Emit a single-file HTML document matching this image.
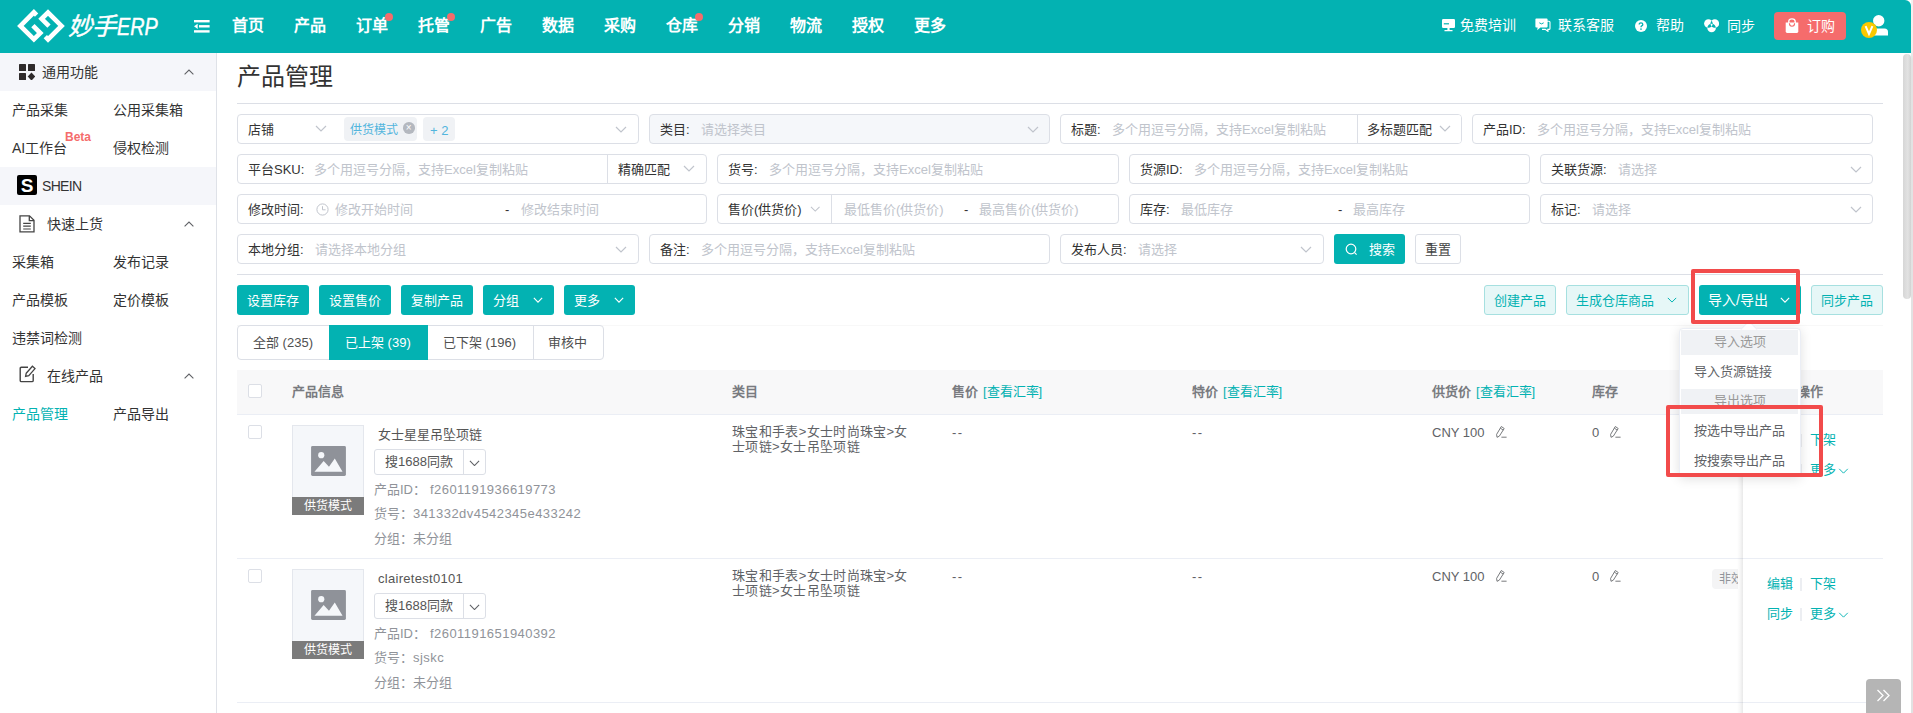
<!DOCTYPE html>
<html lang="zh-CN">
<head>
<meta charset="utf-8">
<title>产品管理</title>
<style>
*{box-sizing:border-box;margin:0;padding:0}
html,body{width:1913px;height:713px;overflow:hidden;background:#fff}
body{position:relative;font-family:"Liberation Sans",sans-serif;font-size:13px;color:#333;line-height:1}
.abs{position:absolute}
/* header */
#hdr{position:absolute;left:0;top:0;width:1911px;height:53px;background:#03b2b2;border-top-right-radius:6px}
.nav{position:absolute;top:16px;font-size:16px;font-weight:bold;color:#fff;line-height:20px;white-space:nowrap}
.dot{position:absolute;width:8px;height:8px;border-radius:50%;background:#f56c6c}
.rnav{position:absolute;top:17px;font-size:14px;color:#fff;line-height:16px;white-space:nowrap}
/* sidebar */
#side{position:absolute;left:0;top:53px;width:217px;height:660px;background:#fff;border-right:1px solid #dfe2e8}
.sh{position:absolute;left:0;width:216px;height:38px;font-size:14px;color:#333;line-height:38px}
.sh.g{background:#f5f6fa}
.sh span{position:absolute;white-space:nowrap}
.si{position:absolute;font-size:14px;color:#333;line-height:18px;white-space:nowrap}
.car{position:absolute;left:184px;width:10px;height:6px}
/* filters */
.hr{position:absolute;left:237px;width:1646px;height:1px;background:#dcdfe6}
.fb{position:absolute;height:30px;border:1px solid #dcdfe6;border-radius:4px;background:#fff;font-size:13px;line-height:29px;white-space:nowrap;overflow:hidden}
.fb .l{position:absolute;left:10px;top:0;color:#333}
.fb .p{position:absolute;top:0;color:#c0c4cc}
.fb .dv{position:absolute;top:0;width:1px;height:28px;background:#dcdfe6}
.chev{position:absolute;width:12px;height:7px}
.btn{position:absolute;height:30px;border-radius:3px;font-size:13px;line-height:31px;white-space:nowrap;text-align:center}
.bt{background:#03b2b2;color:#fff}
.bl{background:#e6f7f7;color:#03b2b2;border:1px solid #a6e0e0;line-height:29px}
.tab{font-size:13px;line-height:35px;color:#505050;white-space:nowrap}

.th{position:absolute;top:370px;height:44px;line-height:44px;font-size:13px;font-weight:bold;color:#797b80;white-space:nowrap}
.th a{font-weight:normal;color:#03b2b2;margin-left:5px}
.cb{position:absolute;left:248px;width:14px;height:14px;border:1px solid #dcdfe6;border-radius:2px;background:#fff}
.td{position:absolute;font-size:13px;line-height:15px;color:#606266;white-space:nowrap}
.tg{position:absolute;font-size:13px;line-height:16px;color:#909399;white-space:nowrap}
.ls{letter-spacing:.45px}
.lk{position:absolute;font-size:13px;line-height:16px;color:#03b2b2;white-space:nowrap}
.rb{position:absolute;left:237px;width:1646px;height:1px;background:#ebeef5}
.vd{position:absolute;width:2px;height:13px;background:#eceef2;margin-left:-1px}
.red{position:absolute;border:4px solid #f24b4b;border-radius:2px}
.mi{position:absolute;left:1694px;font-size:13px;line-height:16px;color:#606266;white-space:nowrap}
.mg{position:absolute;left:1681px;width:117px;background:#f0f2f5;font-size:13px;color:#999;text-align:center;white-space:nowrap}
</style>
</head>
<body>
<!-- HEADER -->
<div id="hdr">
  <svg class="abs" style="left:16px;top:8px" width="50" height="36" viewBox="0 0 50 36">
    <g fill="none" stroke="#fff" stroke-width="4.7" stroke-linejoin="miter" stroke-linecap="butt">
      <path d="M20.6 7.1 L17.9 4.4 L4.4 17.9 L17.9 31.3 L24.3 25 L16.9 17.6"/>
      <path d="M29.3 28.7 L32 31.4 L45.5 17.9 L32 4.5 L25.6 10.8 L33 18.2"/>
    </g>
  </svg>
  <div class="abs" style="left:68px;top:12px;font-size:24.5px;line-height:30px;color:#fff;font-style:italic;white-space:nowrap;-webkit-text-stroke:.45px #fff">妙手<span style="display:inline-block;font-size:23px;transform:scaleX(.86);transform-origin:left center;margin-left:1px">ERP</span></div>
  <svg class="abs" style="left:194px;top:19.7px" width="16" height="13" viewBox="0 0 16 13"><g fill="#fff"><rect x="0" y="0" width="15.6" height="2.4"/><rect x="5" y="5.1" width="10.6" height="2.4"/><rect x="0" y="10.2" width="15.6" height="2.4"/><path d="M0 6.3 L3.7 3.7 L3.7 8.9 Z"/></g></svg>
  <div class="nav" style="left:232px">首页</div>
  <div class="nav" style="left:294px">产品</div>
  <div class="nav" style="left:356px">订单</div><div class="dot" style="left:385px;top:13px"></div>
  <div class="nav" style="left:418px">托管</div><div class="dot" style="left:447px;top:13px"></div>
  <div class="nav" style="left:480px">广告</div>
  <div class="nav" style="left:542px">数据</div>
  <div class="nav" style="left:604px">采购</div>
  <div class="nav" style="left:666px">仓库</div><div class="dot" style="left:695px;top:13px"></div>
  <div class="nav" style="left:728px">分销</div>
  <div class="nav" style="left:790px">物流</div>
  <div class="nav" style="left:852px">授权</div>
  <div class="nav" style="left:914px">更多</div>
  <div class="rnav" style="left:1460px">免费培训</div>
  <div class="rnav" style="left:1558px">联系客服</div>
  <div class="rnav" style="left:1656px">帮助</div>
  <div class="rnav" style="left:1727px;top:18px">同步</div>
  <div class="abs" style="left:1774px;top:12px;width:72px;height:28px;border-radius:4px;background:#f56c6c"></div>
  <div class="rnav" style="left:1807px;top:18px">订购</div>

  <svg class="abs" style="left:1442px;top:19px" width="13" height="13" viewBox="0 0 13 13"><rect x="0" y="0" width="13" height="9" rx="1.2" fill="#fff"/><rect x="1.8" y="4.2" width="5.2" height="1.2" fill="#03b2b2"/><rect x="5.4" y="9" width="2.2" height="2" fill="#fff"/><rect x="2.4" y="10.9" width="8.2" height="1.4" rx=".5" fill="#fff"/></svg>
  <svg class="abs" style="left:1535px;top:18px" width="16" height="14" viewBox="0 0 16 14"><path d="M4.2 3.2 H14 Q15 3.2 15 4.2 V10.4 Q15 11.4 14 11.4 H12.8 L13 13.4 L10.2 11.4 H7" fill="none" stroke="#fff" stroke-width="1.1"/><path d="M1.2 .6 H11.6 Q12.6 .6 12.6 1.6 V8.6 Q12.6 9.6 11.6 9.6 H5.4 L2.2 12.2 L2.6 9.6 H1.2 Q.4 9.6 .4 8.6 V1.6 Q.4 .6 1.2 .6 Z" fill="#fff"/><path d="M4.3 4.8 Q6.5 7 8.7 4.8" fill="none" stroke="#03b2b2" stroke-width="1"/></svg>
  <svg class="abs" style="left:1635px;top:20px" width="12" height="12" viewBox="0 0 12 12"><circle cx="6" cy="6" r="6" fill="#fff"/><path d="M4.2 4.6 Q4.2 2.9 6 2.9 Q7.8 2.9 7.8 4.4 Q7.8 5.4 6.7 5.9 Q6 6.3 6 7.2" fill="none" stroke="#03b2b2" stroke-width="1.3"/><circle cx="6" cy="9.1" r=".85" fill="#03b2b2"/></svg>
  <svg class="abs" style="left:1703.5px;top:19.3px" width="15.2" height="13.4" viewBox="0 0 15.2 13.4"><defs><clipPath id="k1"><circle cx="4.4" cy="4.5" r="4.3"/></clipPath><clipPath id="k2"><circle cx="10.8" cy="4.5" r="4.3"/></clipPath><clipPath id="k3"><circle cx="7.6" cy="9" r="4.3"/></clipPath></defs><circle cx="4.4" cy="4.5" r="4.3" fill="#fff"/><circle cx="10.8" cy="4.5" r="4.3" fill="#fff"/><circle cx="7.6" cy="9" r="4.3" fill="#fff"/><circle cx="10.8" cy="4.5" r="4.3" fill="#03b2b2" clip-path="url(#k1)"/><circle cx="7.6" cy="9" r="4.3" fill="#03b2b2" clip-path="url(#k1)"/><circle cx="7.6" cy="9" r="4.3" fill="#03b2b2" clip-path="url(#k2)"/><g clip-path="url(#k1)"><g clip-path="url(#k2)"><circle cx="7.6" cy="9" r="4.3" fill="#fff"/></g></g></svg>
  <svg class="abs" style="left:1785px;top:18px" width="14" height="16" viewBox="0 0 14 16"><path d="M3.8 5 V3.6 Q3.8 .9 7 .9 Q10.2 .9 10.2 3.6 V5" fill="none" stroke="#fff" stroke-width="1.4"/><path d="M.7 4.4 H13.3 V13.6 Q13.3 15 11.9 15 H2.1 Q.7 15 .7 13.6 Z" fill="#fff"/><path d="M4.4 5.2 Q4.4 8.2 7 8.2 Q9.6 8.2 9.6 5.2" fill="none" stroke="#f56c6c" stroke-width="1.1"/></svg>
  <svg class="abs" style="left:1860px;top:14px" width="30" height="25" viewBox="0 0 30 25"><circle cx="18.7" cy="6.7" r="5.7" fill="#fff"/><path d="M12.5 21.5 V18 Q12.5 14.5 16 14.5 H24.5 Q28 14.5 28 18 V21.5 Z" fill="#fff"/><circle cx="9" cy="16" r="8" fill="#fcc800"/><path d="M5.6 12.2 L9 20 L12.4 12.2" fill="none" stroke="#fff" stroke-width="2"/></svg>
</div>
<!-- SIDEBAR -->
<div id="side">
  <div class="sh g" style="top:0"><span style="left:42px">通用功能</span></div>
  <svg class="abs" style="left:19px;top:11px" width="16" height="16" viewBox="0 0 16 16"><g fill="#2f2b2b"><rect x="0" y="0" width="7" height="7" rx=".6"/><rect x="9" y="0" width="7" height="7" rx=".6"/><rect x="0" y="9" width="7" height="7" rx=".6"/><path d="M12.5 8.4 L16.3 12.5 L12.5 16.6 L8.7 12.5 Z"/></g></svg>
  <svg class="car" style="top:16px" viewBox="0 0 10 6"><path d="M.6 5.4 L5 1 L9.4 5.4" fill="none" stroke="#606266" stroke-width="1.1"/></svg>
  <div class="abs" style="left:17px;top:122px;width:20px;height:20px;border-radius:2px;background:#000;z-index:2"></div>
  <div class="abs" style="left:17px;top:122px;width:20px;height:20px;color:#fff;font-weight:bold;font-size:19px;line-height:21px;text-align:center;z-index:3">S</div>
  <svg class="abs" style="left:19px;top:162px" width="16" height="18" viewBox="0 0 16 18"><path d="M1 .8 H10.5 L15 5.3 V16.8 H1 Z M10.3 1 V5.6 H14.8" fill="none" stroke="#444" stroke-width="1.3"/><path d="M4.2 8.4 H11.8 M4.2 11.2 H11.8 M4.2 14 H11.8" stroke="#444" stroke-width="1.2"/></svg>
  <svg class="car" style="top:168px" viewBox="0 0 10 6"><path d="M.6 5.4 L5 1 L9.4 5.4" fill="none" stroke="#606266" stroke-width="1.1"/></svg>
  <svg class="abs" style="left:19px;top:312px" width="18" height="18" viewBox="0 0 18 18"><path d="M9 2.2 H2.4 Q1.2 2.2 1.2 3.4 V15.4 Q1.2 16.6 2.4 16.6 H13 Q14.2 16.6 14.2 15.4 V9" fill="none" stroke="#444" stroke-width="1.4"/><path d="M7.2 8.2 L13.4 1.2 L16 3.6 L9.8 10.6 L6.6 11.4 Z" fill="none" stroke="#444" stroke-width="1.3"/></svg>
  <svg class="car" style="top:320px" viewBox="0 0 10 6"><path d="M.6 5.4 L5 1 L9.4 5.4" fill="none" stroke="#606266" stroke-width="1.1"/></svg>

  <div class="si" style="left:12px;top:48px">产品采集</div>
  <div class="si" style="left:113px;top:48px">公用采集箱</div>
  <div class="si" style="left:12px;top:86px">AI工作台</div>
  <div class="abs" style="left:65px;top:78px;font-size:12px;font-weight:bold;color:#f56c6c;line-height:12px">Beta</div>
  <div class="si" style="left:113px;top:86px">侵权检测</div>
  <div class="sh g" style="top:114px"><span style="left:42px;letter-spacing:-0.7px">SHEIN</span></div>
  <div class="sh" style="top:152px"><span style="left:47px">快速上货</span></div>
  <div class="si" style="left:12px;top:200px">采集箱</div>
  <div class="si" style="left:113px;top:200px">发布记录</div>
  <div class="si" style="left:12px;top:238px">产品模板</div>
  <div class="si" style="left:113px;top:238px">定价模板</div>
  <div class="si" style="left:12px;top:276px">违禁词检测</div>
  <div class="sh" style="top:304px"><span style="left:47px">在线产品</span></div>
  <div class="si" style="left:12px;top:352px;color:#03b2b2">产品管理</div>
  <div class="si" style="left:113px;top:352px">产品导出</div>
</div>
<!-- MAIN -->
<div class="abs" style="left:237px;top:62px;font-size:24px;line-height:30px;color:#333;white-space:nowrap">产品管理</div>
<div class="hr" style="top:103px"></div>
<div class="hr" style="top:274px"></div>
<div class="hr" style="top:325px;background:#f8f8f8"></div>
<!-- FILTERS -->
<div class="fb" style="left:237px;top:114px;width:402px;"><span class="l">店铺</span><svg class="chev" style="left:77px;top:10px" viewBox="0 0 12 7"><path d="M1 1 L6 6 L11 1" fill="none" stroke="#c0c4cc" stroke-width="1.2"/></svg><span class="abs" style="left:106px;top:2px;width:73px;height:24px;border-radius:4px;background:#f0f2f5"></span><span class="abs" style="left:111.5px;top:0.5px;color:#52b5dd;font-size:12px">供货模式</span><span class="abs" style="left:165px;top:7px;width:11.5px;height:11.5px;border-radius:50%;background:#b4b8bf;color:#fff;font-size:10px;line-height:11.5px;text-align:center">×</span><span class="abs" style="left:185px;top:2px;width:32px;height:24px;border-radius:4px;background:#f0f2f5"></span><span class="abs" style="left:192px;top:1px;color:#52b5dd;font-size:13px">+ 2</span><svg class="chev" style="left:377px;top:11px" viewBox="0 0 12 7"><path d="M1 1 L6 6 L11 1" fill="none" stroke="#c0c4cc" stroke-width="1.2"/></svg></div>
<div class="fb" style="left:649px;top:114px;width:401px;background:#f5f7fa"><span class="l">类目:</span><span class="p" style="left:51px">请选择类目</span><svg class="chev" style="left:377px;top:11px" viewBox="0 0 12 7"><path d="M1 1 L6 6 L11 1" fill="none" stroke="#c0c4cc" stroke-width="1.2"/></svg></div>
<div class="fb" style="left:1060px;top:114px;width:402px;"><span class="l">标题:</span><span class="p" style="left:51px">多个用逗号分隔，支持Excel复制粘贴</span><span class="dv" style="left:296px"></span><span class="abs" style="left:297px;top:0;width:104px;height:28px;background:#fff"></span><span class="l" style="left:306px">多标题匹配</span><svg class="chev" style="left:378px;top:10px" viewBox="0 0 12 7"><path d="M1 1 L6 6 L11 1" fill="none" stroke="#c0c4cc" stroke-width="1.2"/></svg></div>
<div class="fb" style="left:1472px;top:114px;width:401px;"><span class="l">产品ID:</span><span class="p" style="left:64px">多个用逗号分隔，支持Excel复制粘贴</span></div>
<div class="fb" style="left:237px;top:154px;width:470px;"><span class="l">平台SKU:</span><span class="p" style="left:76px">多个用逗号分隔，支持Excel复制粘贴</span><span class="dv" style="left:369px"></span><span class="l" style="left:380px">精确匹配</span><svg class="chev" style="left:445px;top:10px" viewBox="0 0 12 7"><path d="M1 1 L6 6 L11 1" fill="none" stroke="#c0c4cc" stroke-width="1.2"/></svg></div>
<div class="fb" style="left:717px;top:154px;width:402px;"><span class="l">货号:</span><span class="p" style="left:51px">多个用逗号分隔，支持Excel复制粘贴</span></div>
<div class="fb" style="left:1129px;top:154px;width:401px;"><span class="l">货源ID:</span><span class="p" style="left:64px">多个用逗号分隔，支持Excel复制粘贴</span></div>
<div class="fb" style="left:1540px;top:154px;width:333px;"><span class="l">关联货源:</span><span class="p" style="left:77px">请选择</span><svg class="chev" style="left:309px;top:11px" viewBox="0 0 12 7"><path d="M1 1 L6 6 L11 1" fill="none" stroke="#c0c4cc" stroke-width="1.2"/></svg></div>
<div class="fb" style="left:237px;top:194px;width:470px;"><span class="l">修改时间:</span><svg class="abs" style="left:78px;top:8px" width="13" height="13" viewBox="0 0 13 13"><circle cx="6.5" cy="6.5" r="5.6" fill="none" stroke="#c0c4cc" stroke-width="1"/><path d="M6.5 3.2 V6.8 H9.6" fill="none" stroke="#c0c4cc" stroke-width="1"/></svg><span class="p" style="left:97px">修改开始时间</span><span class="l" style="left:267px">-</span><span class="p" style="left:283px">修改结束时间</span></div>
<div class="fb" style="left:717px;top:194px;width:402px;"><span class="l">售价(供货价)</span><svg class="chev" style="left:91.5px;top:10.5px;width:10.5px;height:6px" viewBox="0 0 12 7"><path d="M1 1 L6 6 L11 1" fill="none" stroke="#c0c4cc" stroke-width="1.2"/></svg><span class="dv" style="left:113px"></span><span class="p" style="left:126px">最低售价(供货价)</span><span class="l" style="left:246px">-</span><span class="p" style="left:261px">最高售价(供货价)</span></div>
<div class="fb" style="left:1129px;top:194px;width:401px;"><span class="l">库存:</span><span class="p" style="left:51px">最低库存</span><span class="l" style="left:208px">-</span><span class="p" style="left:223px">最高库存</span></div>
<div class="fb" style="left:1540px;top:194px;width:333px;"><span class="l">标记:</span><span class="p" style="left:51px">请选择</span><svg class="chev" style="left:309px;top:11px" viewBox="0 0 12 7"><path d="M1 1 L6 6 L11 1" fill="none" stroke="#c0c4cc" stroke-width="1.2"/></svg></div>
<div class="fb" style="left:237px;top:234px;width:402px;"><span class="l">本地分组:</span><span class="p" style="left:77px">请选择本地分组</span><svg class="chev" style="left:377px;top:11px" viewBox="0 0 12 7"><path d="M1 1 L6 6 L11 1" fill="none" stroke="#c0c4cc" stroke-width="1.2"/></svg></div>
<div class="fb" style="left:649px;top:234px;width:401px;"><span class="l">备注:</span><span class="p" style="left:51px">多个用逗号分隔，支持Excel复制粘贴</span></div>
<div class="fb" style="left:1060px;top:234px;width:264px;"><span class="l">发布人员:</span><span class="p" style="left:77px">请选择</span><svg class="chev" style="left:239px;top:11px" viewBox="0 0 12 7"><path d="M1 1 L6 6 L11 1" fill="none" stroke="#c0c4cc" stroke-width="1.2"/></svg></div>
<div class="btn bt" style="left:1334px;top:234px;width:71px"><svg class="abs" style="left:11px;top:9px" width="13" height="13" viewBox="0 0 13 13"><circle cx="6" cy="6" r="4.8" fill="none" stroke="#fff" stroke-width="1.2"/><path d="M9.6 9.6 L11.6 11.6" stroke="#fff" stroke-width="1.2"/></svg><span class="abs" style="left:35px;top:0">搜索</span></div>
<div class="btn" style="left:1415px;top:234px;width:46px;border:1px solid #dcdfe6;line-height:29px;color:#444;background:#fff">重置</div>
<div class="btn bt" style="left:237px;top:285px;width:72px"><span class="abs" style="left:10px;top:0">设置库存</span></div>
<div class="btn bt" style="left:319px;top:285px;width:72px"><span class="abs" style="left:10px;top:0">设置售价</span></div>
<div class="btn bt" style="left:401px;top:285px;width:72px"><span class="abs" style="left:10px;top:0">复制产品</span></div>
<div class="btn bt" style="left:483px;top:285px;width:71px"><span class="abs" style="left:10px;top:0">分组</span><svg class="chev" style="left:50px;top:12px;width:10px;height:6px" viewBox="0 0 12 7"><path d="M1 1 L6 6 L11 1" fill="none" stroke="#fff" stroke-width="1.4"/></svg></div>
<div class="btn bt" style="left:564px;top:285px;width:71px"><span class="abs" style="left:10px;top:0">更多</span><svg class="chev" style="left:50px;top:12px;width:10px;height:6px" viewBox="0 0 12 7"><path d="M1 1 L6 6 L11 1" fill="none" stroke="#fff" stroke-width="1.4"/></svg></div>
<div class="btn bl" style="left:1484px;top:285px;width:72px"><span class="abs" style="left:9px;top:0">创建产品</span></div>
<div class="btn bl" style="left:1566px;top:285px;width:123px"><span class="abs" style="left:9px;top:0">生成仓库商品</span><svg class="chev" style="left:100px;top:11px;width:10px;height:6px" viewBox="0 0 12 7"><path d="M1 1 L6 6 L11 1" fill="none" stroke="#03b2b2" stroke-width="1.2"/></svg></div>
<div class="btn bl" style="left:1811px;top:285px;width:72px"><span class="abs" style="left:9px;top:0">同步产品</span></div>
<div class="btn bt" style="left:1699px;top:285px;width:102px"><span class="abs" style="left:9px;top:0;font-size:14px">导入/导出</span><svg class="chev" style="left:81px;top:12px;width:10px;height:6px" viewBox="0 0 12 7"><path d="M1 1 L6 6 L11 1" fill="none" stroke="#fff" stroke-width="1.4"/></svg></div>
<div class="abs" style="left:237px;top:325px;width:367px;height:35px;border:1px solid #dcdfe6;border-radius:4px;background:#fff"></div>
<div class="abs" style="left:329px;top:325px;width:99px;height:35px;background:#03b2b2"></div>
<div class="abs" style="left:533px;top:326px;width:1px;height:33px;background:#dcdfe6"></div>
<div class="abs tab" style="left:253px;top:325px">全部 (235)</div>
<div class="abs tab" style="left:345px;top:325px;color:#fff">已上架 (39)</div>
<div class="abs tab" style="left:443px;top:325px">已下架 (196)</div>
<div class="abs tab" style="left:548px;top:325px">审核中</div>
<!-- TABLE -->
<div class="abs" style="left:237px;top:370px;width:1646px;height:44px;background:#f8f8f9"></div><div class="rb" style="top:414px"></div>
<div class="cb" style="top:384px"></div>
<div class="th" style="left:292px">产品信息</div><div class="th" style="left:732px">类目</div><div class="th" style="left:952px">售价<a>[查看汇率]</a></div><div class="th" style="left:1192px">特价<a>[查看汇率]</a></div><div class="th" style="left:1432px">供货价<a>[查看汇率]</a></div><div class="th" style="left:1592px">库存</div>
<div class="cb" style="top:425px"></div>
<div class="abs" style="left:292px;top:425px;width:72px;height:90px;background:#f5f7fa;border:1px solid #e4e7ed"></div>
<svg class="abs" style="left:310.5px;top:446px" width="35" height="30" viewBox="0 0 36 31"><rect width="36" height="31" rx="1.5" fill="#8f9299"/><circle cx="10.5" cy="9.5" r="3.2" fill="#f5f7fa"/><path d="M3.5 26.5 L13 15.5 L18.5 21.5 L24.5 13 L32.5 26.5 Z" fill="#f5f7fa"/></svg>
<div class="abs" style="left:292px;top:497px;width:72px;height:18px;background:#7b7b7b;color:#fff;font-size:12px;line-height:18px;text-align:center">供货模式</div>
<div class="td" style="left:378px;top:427px;color:#555">女士星星吊坠项链</div>
<div class="abs" style="left:374px;top:449px;width:112px;height:26px;border:1px solid #dcdfe6;border-radius:3px;background:#fff"></div><div class="abs" style="left:463px;top:450px;width:1px;height:24px;background:#dcdfe6"></div>
<div class="td" style="left:385px;top:454px;color:#555;line-height:16px">搜1688同款</div><svg class="chev" style="left:469px;top:459.5px;width:11px;height:6.5px" viewBox="0 0 12 7"><path d="M1 1 L6 6 L11 1" fill="none" stroke="#606266" stroke-width="1.2"/></svg>
<div class="tg" style="left:374px;top:482px">产品ID：</div><div class="tg ls" style="left:430px;top:482px">f2601191936619773</div>
<div class="tg" style="left:374px;top:506px">货号：</div><div class="tg ls" style="left:413px;top:506px">341332dv4542345e433242</div>
<div class="tg" style="left:374px;top:531px">分组：</div><div class="tg" style="left:413px;top:531px">未分组</div>
<div class="td" style="left:732px;top:424px;letter-spacing:.33px">珠宝和手表&gt;女士时尚珠宝&gt;女<br>士项链&gt;女士吊坠项链</div>
<div class="td" style="left:952px;top:425px;letter-spacing:1.5px">--</div><div class="td" style="left:1192px;top:425px;letter-spacing:1.5px">--</div>
<div class="td" style="left:1432px;top:425px">CNY 100</div><svg class="abs" style="left:1496px;top:426px" width="11" height="12" viewBox="0 0 11 12"><path d="M5.3 .5 L8.2 2.5 L3.3 10.2 L1 11.3 L.6 8.4 Z M4.3 2.1 L7.2 4.1 M5.4 11.2 H10.6" fill="none" stroke="#606266" stroke-width="0.85"/></svg>
<div class="td" style="left:1592px;top:425px">0</div><svg class="abs" style="left:1610px;top:426px" width="11" height="12" viewBox="0 0 11 12"><path d="M5.3 .5 L8.2 2.5 L3.3 10.2 L1 11.3 L.6 8.4 Z M4.3 2.1 L7.2 4.1 M5.4 11.2 H10.6" fill="none" stroke="#606266" stroke-width="0.85"/></svg>
<div class="rb" style="top:558px"></div>
<div class="cb" style="top:569px"></div>
<div class="abs" style="left:292px;top:569px;width:72px;height:90px;background:#f5f7fa;border:1px solid #e4e7ed"></div>
<svg class="abs" style="left:310.5px;top:590px" width="35" height="30" viewBox="0 0 36 31"><rect width="36" height="31" rx="1.5" fill="#8f9299"/><circle cx="10.5" cy="9.5" r="3.2" fill="#f5f7fa"/><path d="M3.5 26.5 L13 15.5 L18.5 21.5 L24.5 13 L32.5 26.5 Z" fill="#f5f7fa"/></svg>
<div class="abs" style="left:292px;top:641px;width:72px;height:18px;background:#7b7b7b;color:#fff;font-size:12px;line-height:18px;text-align:center">供货模式</div>
<div class="td" style="left:378px;top:571px;color:#555;letter-spacing:.3px">clairetest0101</div>
<div class="abs" style="left:374px;top:593px;width:112px;height:26px;border:1px solid #dcdfe6;border-radius:3px;background:#fff"></div><div class="abs" style="left:463px;top:594px;width:1px;height:24px;background:#dcdfe6"></div>
<div class="td" style="left:385px;top:598px;color:#555;line-height:16px">搜1688同款</div><svg class="chev" style="left:469px;top:603.5px;width:11px;height:6.5px" viewBox="0 0 12 7"><path d="M1 1 L6 6 L11 1" fill="none" stroke="#606266" stroke-width="1.2"/></svg>
<div class="tg" style="left:374px;top:626px">产品ID：</div><div class="tg ls" style="left:430px;top:626px">f2601191651940392</div>
<div class="tg" style="left:374px;top:650px">货号：</div><div class="tg ls" style="left:413px;top:650px">sjskc</div>
<div class="tg" style="left:374px;top:675px">分组：</div><div class="tg" style="left:413px;top:675px">未分组</div>
<div class="td" style="left:732px;top:568px;letter-spacing:.33px">珠宝和手表&gt;女士时尚珠宝&gt;女<br>士项链&gt;女士吊坠项链</div>
<div class="td" style="left:952px;top:569px;letter-spacing:1.5px">--</div><div class="td" style="left:1192px;top:569px;letter-spacing:1.5px">--</div>
<div class="td" style="left:1432px;top:569px">CNY 100</div><svg class="abs" style="left:1496px;top:570px" width="11" height="12" viewBox="0 0 11 12"><path d="M5.3 .5 L8.2 2.5 L3.3 10.2 L1 11.3 L.6 8.4 Z M4.3 2.1 L7.2 4.1 M5.4 11.2 H10.6" fill="none" stroke="#606266" stroke-width="0.85"/></svg>
<div class="td" style="left:1592px;top:569px">0</div><svg class="abs" style="left:1610px;top:570px" width="11" height="12" viewBox="0 0 11 12"><path d="M5.3 .5 L8.2 2.5 L3.3 10.2 L1 11.3 L.6 8.4 Z M4.3 2.1 L7.2 4.1 M5.4 11.2 H10.6" fill="none" stroke="#606266" stroke-width="0.85"/></svg>
<div class="rb" style="top:702px"></div>
<div class="abs" style="left:1712px;top:569px;width:26px;height:20px;border-radius:4px 0 0 4px;background:#f4f4f5;font-size:12px;line-height:20px;color:#909399;padding-left:7px;white-space:nowrap;overflow:hidden">非效</div>
<div class="abs" style="left:1743px;top:370px;width:140px;height:343px;background:#fff"></div><div class="abs" style="left:1737px;top:370px;width:6px;height:343px;background:linear-gradient(90deg,rgba(0,0,0,0),rgba(0,0,0,.03) 50%,rgba(0,0,0,.085))"></div>
<div class="abs" style="left:1743px;top:370px;width:140px;height:44px;background:#f8f8f9"></div><div class="abs" style="left:1743px;top:414px;width:140px;height:1px;background:#ebeef5"></div><div class="abs" style="left:1743px;top:558px;width:140px;height:1px;background:#ebeef5"></div><div class="abs" style="left:1743px;top:702px;width:140px;height:1px;background:#ebeef5"></div>
<div class="th" style="left:1797px">操作</div>
<div class="lk" style="left:1767px;top:432px">编辑</div><div class="vd" style="left:1801px;top:434px"></div><div class="lk" style="left:1810px;top:432px">下架</div>
<div class="lk" style="left:1767px;top:462px">同步</div><div class="vd" style="left:1801px;top:464px"></div><div class="lk" style="left:1810px;top:462px">更多</div><svg class="chev" style="left:1837.5px;top:467.5px;width:11px;height:6px" viewBox="0 0 12 7"><path d="M1 1 L6 6 L11 1" fill="none" stroke="#03b2b2" stroke-width="1.1"/></svg>
<div class="lk" style="left:1767px;top:576px">编辑</div><div class="vd" style="left:1801px;top:578px"></div><div class="lk" style="left:1810px;top:576px">下架</div>
<div class="lk" style="left:1767px;top:606px">同步</div><div class="vd" style="left:1801px;top:608px"></div><div class="lk" style="left:1810px;top:606px">更多</div><svg class="chev" style="left:1837.5px;top:611.5px;width:11px;height:6px" viewBox="0 0 12 7"><path d="M1 1 L6 6 L11 1" fill="none" stroke="#03b2b2" stroke-width="1.1"/></svg>
<div class="abs" style="left:1679px;top:328px;width:122px;height:149px;background:#fff;border:1px solid #ebeef5;border-radius:4px;box-shadow:0 2px 12px rgba(0,0,0,.12)"></div>
<div class="abs" style="left:1743px;top:323px;width:12px;height:12px;background:#fff;border-left:1px solid #ebeef5;border-top:1px solid #ebeef5;transform:rotate(45deg)"></div>
<div class="mg" style="top:330px;height:25px;line-height:24px">导入选项</div>
<div class="mi" style="top:364px">导入货源链接</div>
<div class="mg" style="top:389px;height:25px;line-height:23px">导出选项</div>
<div class="mi" style="top:423px">按选中导出产品</div>
<div class="mi" style="top:453px">按搜索导出产品</div>
<div class="red" style="left:1691px;top:269px;width:109px;height:55px"></div>
<div class="red" style="left:1666px;top:405px;width:157px;height:72px"></div>
<div class="abs" style="left:1866px;top:679px;width:35px;height:40px;border-radius:4px;background:#b5b5b5"></div><svg class="abs" style="left:1876px;top:689px" width="14" height="13" viewBox="0 0 14 13"><path d="M1.5 1 L7 6.5 L1.5 12 M7.5 1 L13 6.5 L7.5 12" fill="none" stroke="#fff" stroke-width="1.3"/></svg>
<div class="abs" style="left:1911px;top:0;width:2px;height:713px;background:linear-gradient(180deg,#f6efef 0,#f3ecec 50px,#e2e2e2 60px)"></div><div class="abs" style="left:1903px;top:54px;width:8px;height:245px;border-radius:4px;background:linear-gradient(90deg,#d6d6d6,#e2e2e2 60%,#d2d2d2)"></div>

</body>
</html>
